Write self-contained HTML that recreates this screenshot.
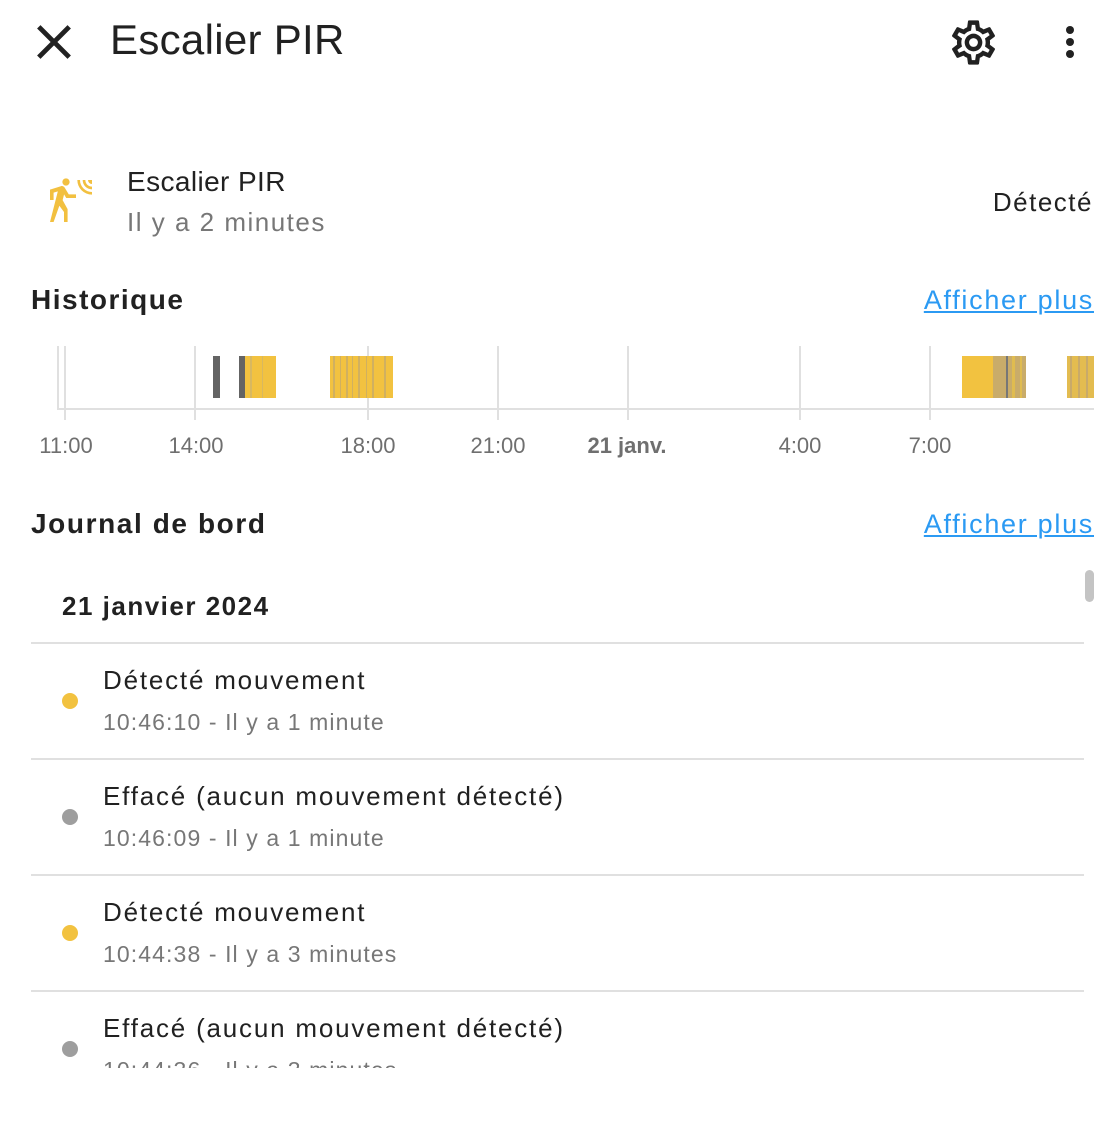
<!DOCTYPE html>
<html><head><meta charset="utf-8"><style>
body{margin:0;width:1114px;height:1126px;background:#fff;font-family:"Liberation Sans",sans-serif;color:#212121;position:relative;overflow:hidden}
.a{position:absolute;white-space:nowrap}
.lnk{color:#2b9af3;text-decoration:underline;font-size:27px;letter-spacing:1.7px}
.h{font-weight:bold;font-size:28px}
.sep{position:absolute;left:31px;width:1053px;height:2px;background:#e0e0e0}
.dot{position:absolute;left:62px;width:16px;height:16px;border-radius:50%}
.p{font-size:26px;left:103px;letter-spacing:1.8px}
.s{font-size:23px;left:103px;color:#777;letter-spacing:1.1px}
.lbl{position:absolute;top:433px;font-size:22px;color:#6f6f6f;transform:translateX(-50%)}
</style></head><body>
<svg class="a" style="left:25px;top:13px" width="58" height="58" viewBox="0 0 24 24"><path d="M19 6.41L17.59 5 12 10.59 6.41 5 5 6.41 10.59 12 5 17.59 6.41 19 12 13.41 17.59 19 19 17.59 13.41 12z" fill="#212121"/></svg>
<div class="a" style="left:110px;top:16px;font-size:42px;letter-spacing:0.3px">Escalier PIR</div>
<svg class="a" style="left:947px;top:16px" width="53" height="53" viewBox="0 0 24 24"><path fill="#212121" d="M12 8a4 4 0 0 1 4 4 4 4 0 0 1-4 4 4 4 0 0 1-4-4 4 4 0 0 1 4-4m0 2a2 2 0 0 0-2 2 2 2 0 0 0 2 2 2 2 0 0 0 2-2 2 2 0 0 0-2-2m-2 12c-.25 0-.46-.18-.5-.42l-.37-2.65c-.63-.25-1.17-.59-1.690-.99l-2.49 1.01c-.22.08-.49 0-.61-.22l-2-3.46a.493.493 0 0 1 .12-.64l2.11-1.66L4.5 12l.07-1-2.11-1.63a.493.493 0 0 1-.12-.64l2-3.46c.12-.22.39-.31.61-.22l2.49 1c.52-.39 1.06-.73 1.69-.98l.37-2.65c.04-.24.25-.42.5-.42h4c.25 0 .46.18.5.42l.37 2.65c.63.25 1.17.59 1.69.98l2.49-1c.22-.09.49 0 .61.22l2 3.46c.13.22.07.49-.12.64L19.43 11l.07 1-.07 1 2.11 1.63c.19.15.25.42.12.64l-2 3.46c-.12.22-.39.31-.61.22l-2.49-1c-.52.39-1.06.73-1.69.98l-.37 2.65c-.04.24-.25.42-.5.42h-4m1.25-18l-.37 2.61c-1.2.25-2.26.89-3.03 1.78L5.44 7.35l-.75 1.3L6.8 10.2a5.55 5.550 0 0 0 0 3.6l-2.12 1.56.75 1.3 2.43-1.04c.77.88 1.82 1.52 3.01 1.76l.37 2.62h1.52l.37-2.61c1.19-.25 2.24-.89 3.01-1.77l2.43 1.04.75-1.3-2.12-1.55c.4-1.17.4-2.44 0-3.61l2.11-1.55-.75-1.3-2.41 1.04a5.42 5.42 0 0 0-3.030-1.77L12.75 4h-1.5z"/></svg>
<svg class="a" style="left:1058px;top:22px" width="24" height="40" viewBox="0 0 24 40"><circle cx="12" cy="8" r="4" fill="#212121"/><circle cx="12" cy="20" r="4" fill="#212121"/><circle cx="12" cy="32" r="4" fill="#212121"/></svg>

<svg class="a" style="left:46px;top:178px" width="48" height="48" viewBox="0 0 24 24"><path fill="#f2c040" d="M10,0.2C9,0.2 8.2,1 8.2,2C8.2,3 9,3.8 10,3.8C11,3.8 11.8,3 11.8,2C11.8,1 11,0.2 10,0.2M15.67,1A7.33,7.33 0 0,0 23,8.33V7A6,6 0 0,1 17,1H15.67M18.33,1C18.33,3.58 20.42,5.67 23,5.67V4.33C21.16,4.33 19.670,2.84 19.67,1H18.33M21,1A2,2 0 0,0 23,3V1H21M7.92,4.03C7.75,4.03 7.58,4.06 7.42,4.11L2,5.8V11H3.8V7.33L5.91,6.67L2,22H3.8L6.67,13.89L9,17V22H10.8V15.59L8.31,11.05L9.04,8.18L10.12,10H15V8.2H11.38L9.38,4.87C9.08,4.37 8.54,4.03 7.92,4.03Z"/></svg>
<div class="a" style="left:127px;top:166px;font-size:28px;letter-spacing:0.4px">Escalier PIR</div>
<div class="a" style="left:127px;top:207px;font-size:26px;color:#777;letter-spacing:1.5px">Il y a 2 minutes</div>
<div class="a" style="right:21px;top:187px;font-size:26px;letter-spacing:1.5px">Détecté</div>

<div class="a h" style="left:31px;top:284px;letter-spacing:1.5px">Historique</div>
<div class="a lnk" style="right:20px;top:285px">Afficher plus</div>

<svg class="a" style="left:0;top:340px" width="1114" height="90">
<g stroke="#e0e0e0" stroke-width="2">
<line x1="58" y1="6" x2="58" y2="68"/><line x1="65" y1="6" x2="65" y2="80"/><line x1="195" y1="6" x2="195" y2="80"/><line x1="368" y1="6" x2="368" y2="80"/><line x1="498" y1="6" x2="498" y2="80"/><line x1="628" y1="6" x2="628" y2="80"/><line x1="800" y1="6" x2="800" y2="80"/><line x1="930" y1="6" x2="930" y2="80"/>
<line x1="57" y1="69" x2="1094" y2="69"/></g>
<rect x="213" y="16" width="7" height="42" fill="#646464"/>
<rect x="239" y="16" width="6" height="42" fill="#646464"/>
<rect x="245" y="16" width="31" height="42" fill="#f2c240"/>
<rect x="250" y="16" width="2" height="42" fill="#d8b860"/><rect x="262" y="16" width="1" height="42" fill="#d8b860"/>
<rect x="330" y="16" width="63" height="42" fill="#f2c240"/>
<g fill="#d0b060"><rect x="333" y="16" width="2" height="42"/><rect x="340" y="16" width="1" height="42"/><rect x="346" y="16" width="2" height="42"/><rect x="352" y="16" width="1" height="42"/><rect x="358" y="16" width="2" height="42"/><rect x="366" y="16" width="1" height="42"/><rect x="372" y="16" width="2" height="42"/><rect x="384" y="16" width="2" height="42"/></g>
<rect x="962" y="16" width="32" height="42" fill="#f2c240"/>
<rect x="993" y="16" width="33" height="42" fill="#c9ac6a"/>
<rect x="1006" y="16" width="2" height="42" fill="#777"/><rect x="1012" y="16" width="3" height="42" fill="#e0bc50"/><rect x="1020" y="16" width="2" height="42" fill="#e0bc50"/>
<rect x="1067" y="16" width="27" height="42" fill="#e3bc50"/>
<rect x="1070" y="16" width="2" height="42" fill="#c8aa6a"/><rect x="1078" y="16" width="2" height="42" fill="#c8aa6a"/><rect x="1086" y="16" width="2" height="42" fill="#c8aa6a"/>
</svg>
<div class="lbl" style="left:66px">11:00</div>
<div class="lbl" style="left:196px">14:00</div>
<div class="lbl" style="left:368px">18:00</div>
<div class="lbl" style="left:498px">21:00</div>
<div class="lbl" style="left:627px;font-weight:bold">21 janv.</div>
<div class="lbl" style="left:800px">4:00</div>
<div class="lbl" style="left:930px">7:00</div>

<div class="a h" style="left:31px;top:508px;letter-spacing:1.6px">Journal de bord</div>
<div class="a lnk" style="right:20px;top:509px">Afficher plus</div>
<div class="a" style="left:1085px;top:570px;width:9px;height:32px;border-radius:5px;background:#c4c4c4"></div>

<div style="position:absolute;left:0;top:560px;width:1114px;height:508px;overflow:hidden">
<div class="a" style="left:62px;top:31px;font-size:26px;font-weight:bold;letter-spacing:1.5px">21 janvier 2024</div>
<div class="sep" style="top:82px"></div>
<div class="a p" style="top:105px">Détecté mouvement</div>
<div class="a s" style="top:149px">10:46:10 - Il y a 1 minute</div>
<div class="dot" style="top:133px;background:#f2c240"></div>
<div class="sep" style="top:198px"></div>
<div class="a p" style="top:221px">Effacé (aucun mouvement détecté)</div>
<div class="a s" style="top:265px">10:46:09 - Il y a 1 minute</div>
<div class="dot" style="top:249px;background:#9e9e9e"></div>
<div class="sep" style="top:314px"></div>
<div class="a p" style="top:337px">Détecté mouvement</div>
<div class="a s" style="top:381px">10:44:38 - Il y a 3 minutes</div>
<div class="dot" style="top:365px;background:#f2c240"></div>
<div class="sep" style="top:430px"></div>
<div class="a p" style="top:453px">Effacé (aucun mouvement détecté)</div>
<div class="a s" style="top:497px">10:44:36 - Il y a 3 minutes</div>
<div class="dot" style="top:481px;background:#9e9e9e"></div>
</div>
</body></html>
